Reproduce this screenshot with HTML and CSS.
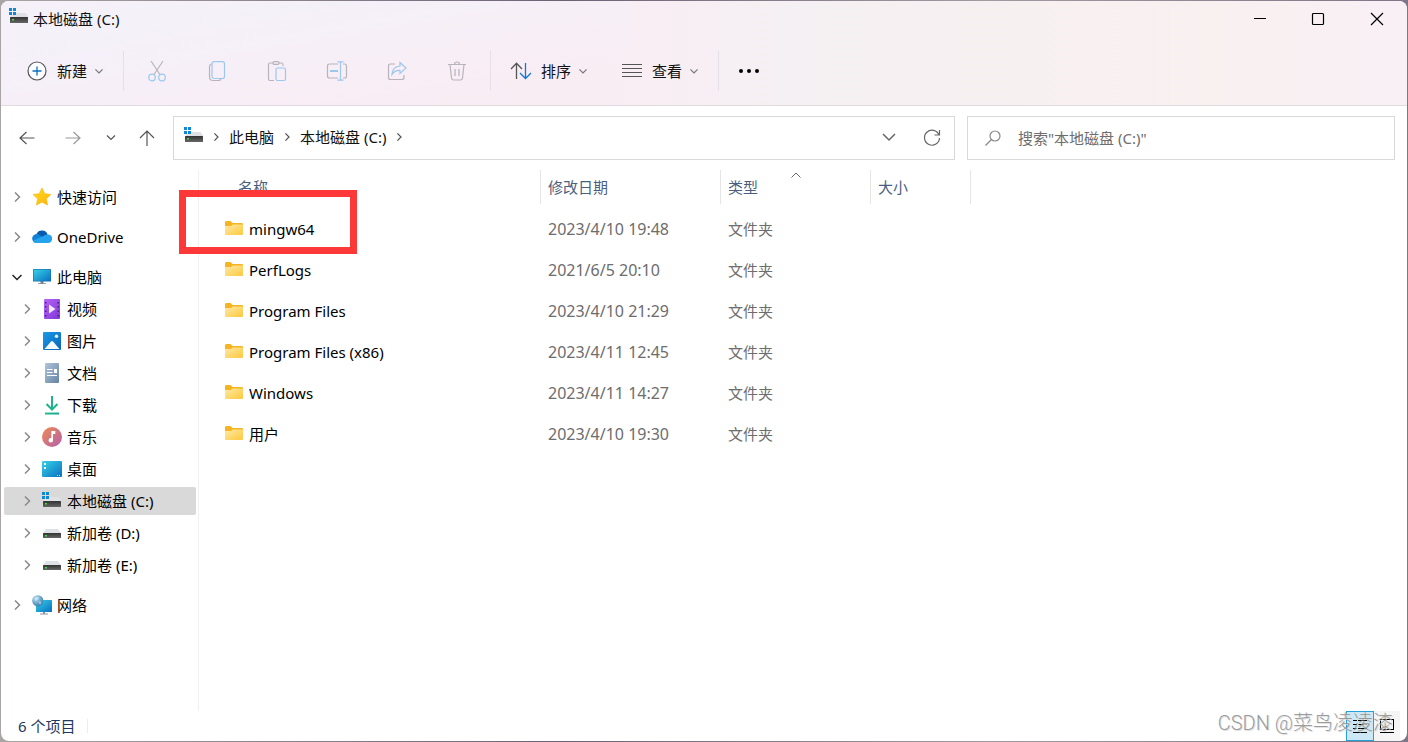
FILE: index.html
```html
<!DOCTYPE html>
<html lang="zh-CN">
<head>
<meta charset="utf-8">
<title>本地磁盘 (C:)</title>
<link rel="stylesheet" href="styles.css">
</head>
<body>
<svg class="defs" aria-hidden="true">
  <defs>
    <linearGradient id="g-folder" x1="0" y1="0" x2="1" y2="1"><stop offset="0" stop-color="#ffe9a6"/><stop offset="1" stop-color="#fdc93d"/></linearGradient>
    <linearGradient id="g-screen" x1="0" y1="0" x2="1" y2="1"><stop offset="0" stop-color="#35d3e6"/><stop offset="1" stop-color="#0b6fc2"/></linearGradient>
    <linearGradient id="g-star" x1="0" y1="0" x2="1" y2="1"><stop offset="0" stop-color="#ffdb1f"/><stop offset="1" stop-color="#fdb30c"/></linearGradient>
    <linearGradient id="g-video" x1="0" y1="0" x2="1" y2="1"><stop offset="0" stop-color="#b565f5"/><stop offset="1" stop-color="#8036d8"/></linearGradient>
    <linearGradient id="g-pic" x1="0" y1="0" x2="1" y2="1"><stop offset="0" stop-color="#1a9be6"/><stop offset="1" stop-color="#0a63bb"/></linearGradient>
    <linearGradient id="g-doc" x1="0" y1="0" x2="1" y2="1"><stop offset="0" stop-color="#b3c6d9"/><stop offset="1" stop-color="#6482a4"/></linearGradient>
    <linearGradient id="g-down" x1="0" y1="0" x2="1" y2="1"><stop offset="0" stop-color="#37c48b"/><stop offset="1" stop-color="#0a9f96"/></linearGradient>
    <linearGradient id="g-music" x1="0" y1="0" x2="1" y2="1"><stop offset="0" stop-color="#f08a50"/><stop offset="1" stop-color="#b35fae"/></linearGradient>
    <radialGradient id="g-globe" cx=".35" cy=".3" r=".8"><stop offset="0" stop-color="#b5dcf0"/><stop offset="1" stop-color="#2b77a8"/></radialGradient>
    <linearGradient id="g-drive" x1="0" y1="0" x2="0" y2="1"><stop offset="0" stop-color="#333"/><stop offset="1" stop-color="#666"/></linearGradient>
  </defs>
  <symbol id="i-drive" viewBox="0 0 20 20"><path d="M4 6h12l3 4H1z" fill="#dfe1e4"/><rect x="1" y="10" width="18" height="5" rx=".6" fill="url(#g-drive)"/><rect x="3" y="12" width="2" height="1.500" fill="#36e34a"/></symbol>
  <symbol id="i-sysdrive" viewBox="0 0 20 20"><path d="M7 6h9.500l3 4H2V8h5z" fill="#dfe1e4"/><rect x="1" y="10" width="18" height="6" rx=".6" fill="url(#g-drive)"/><rect x="3" y="12" width="2" height="1.500" fill="#36e34a"/><path d="M0 1h3v3H0zM4 1h3v3H4zM0 5h3v3H0zM4 5h3v3H4z" fill="#0f88d8"/></symbol>
  <symbol id="i-folder" viewBox="0 0 20 20"><path d="M1 3.500Q1 2 2.300 2h4.200L8.500 4h9.200Q19 4 19 5.300V9H1z" fill="#f5b420"/><path d="M1 7h6l1.800-1.600H18.200q.8 0 .8.800v8.800q0 1-1 1H2q-1 0-1-1z" fill="url(#g-folder)"/></symbol>
  <symbol id="i-star" viewBox="0 0 20 20"><path d="M10 1l2.700 5.700 6.200.8-4.500 4.300 1.100 6.200-5.500-3-5.500 3 1.100-6.200L1.100 7.500l6.200-.8z" fill="url(#g-star)" stroke="#f9bd16" stroke-width=".8" stroke-linejoin="round"/></symbol>
  <symbol id="i-cloud" viewBox="0 0 20 20"><path d="M4.500 7A6 6 0 0 1 15.600 7.500L10 11.500z" fill="#0a5ab0"/><path d="M4.600 16A4.500 4.500 0 1 1 6 7.200L12.500 11z" fill="#1382d6"/><path d="M15.800 7.400A4.300 4.300 0 0 1 16 16H4.600Q2.500 16 1 13.800L12 8.800q1.500-1.500 3.800-1.400z" fill="#26a3ee"/></symbol>
  <symbol id="i-pc" viewBox="0 0 20 20"><path d="M8.500 14h3v2.300H14V17H6v-.7h2.500z" fill="#7b8794"/><rect x="1" y="2" width="18" height="12.500" rx=".6" fill="#176ca8"/><rect x="1.600" y="2.600" width="16.800" height="11.300" fill="url(#g-screen)"/></symbol>
  <symbol id="i-video" viewBox="0 0 20 20"><rect x="2" y="0" width="16" height="20" rx="1" fill="url(#g-video)"/><path d="M3 3h1.500v1.500H3zM3 7h1.500v1.500H3zM3 11.500h1.500V13H3zM3 16h1.500v1.500H3zM15.500 3H17v1.500h-1.500zM15.500 7H17v1.500h-1.500zM15.500 11.500H17V13h-1.500zM15.500 16H17v1.500h-1.500z" fill="#43207c"/><path d="M7 5.500l6.500 4.500L7 14.500z" fill="#f4eaff"/></symbol>
  <symbol id="i-pic" viewBox="0 0 20 20"><rect x="1" y="1" width="18" height="18" rx="1" fill="url(#g-pic)"/><path d="M2.500 18l6.300-7.300q1.200-1.200 2.400 0L17.500 18z" fill="#f4faff"/><circle cx="14.500" cy="5.300" r="1.700" fill="#e8f6ff"/></symbol>
  <symbol id="i-doc" viewBox="0 0 20 20"><rect x="3" y="0" width="14" height="20" rx="1" fill="url(#g-doc)"/><path d="M5 6.500h5.500M5 9.500h5.500M5 12.500h10" stroke="#fff" stroke-width="1.200"/><rect x="12" y="6" width="3" height="4" fill="#fff"/></symbol>
  <symbol id="i-down" viewBox="0 0 20 20"><path d="M10 1v13M4.500 9l5.500 5.500L15.500 9" fill="none" stroke="#20b38f" stroke-width="2"/><rect x="3" y="17.500" width="14" height="2" fill="url(#g-down)"/></symbol>
  <symbol id="i-music" viewBox="0 0 20 20"><circle cx="10" cy="10" r="10" fill="url(#g-music)"/><path d="M9.300 4h4v3H11v6.200a2.200 2.200 0 1 1-1.700-2z" fill="#fff"/></symbol>
  <symbol id="i-desk" viewBox="0 0 20 20"><rect x="0" y="2" width="20" height="16" rx="1" fill="url(#g-screen)"/><path d="M2 4h2v2H2zM2 8h2v2H2z" fill="#fff"/><path d="M15 16.500h1M17 16.500h1" stroke="#bfe6ff"/></symbol>
  <symbol id="i-net" viewBox="0 0 20 20"><path d="M11 16h2v2.500h3v1H8v-1h3z" fill="#8795a3"/><rect x="4" y="5" width="16" height="12" rx=".6" fill="url(#g-screen)"/><circle cx="5.800" cy="5.800" r="5.600" fill="url(#g-globe)"/><path d="M2.500 3Q5 1 7 2.500L5.500 5 3 6zM6.500 6.500l3 .5-1.500 3z" fill="#d5edf6" opacity=".6"/></symbol>
  <symbol id="i-right" viewBox="0 0 10 10"><path d="M3 .5L7.500 5 3 9.500" fill="none" stroke="currentColor" stroke-width="1.500"/></symbol>
  <symbol id="i-open" viewBox="0 0 10 10"><path d="M.5 3L5 7.500 9.500 3" fill="none" stroke="currentColor" stroke-width="1.500"/></symbol>
</svg>

<div class="window">
  <header class="chrome">
    <div class="titlebar">
      <h1 class="title"><svg class="icon"><use href="#i-sysdrive"/></svg>本地磁盘 (C:)</h1>
      <div class="window-buttons">
        <button class="win-btn" aria-label="最小化"><svg class="caption" viewBox="0 0 14 14"><path d="M1 6.500h12"/></svg></button>
        <button class="win-btn" aria-label="最大化"><svg class="caption" viewBox="0 0 14 14"><rect x="1.500" y="1.500" width="11" height="11" rx="1"/></svg></button>
        <button class="win-btn" aria-label="关闭"><svg class="caption" viewBox="0 0 14 14"><path d="M1 1l12 12M13 1L1 13"/></svg></button>
      </div>
    </div>
    <div class="toolbar">
      <button class="cmd"><svg class="icon" viewBox="0 0 20 20"><circle cx="10" cy="10" r="9" fill="#fdfcff" stroke="#555" stroke-width="1.200"/><path d="M10 5.500v9M5.500 10h9" stroke="#0a6fc8" stroke-width="1.300"/></svg><span>新建</span><svg class="caret"><use href="#i-open"/></svg></button>
      <div class="divider"></div>
      <div class="icon-group">
        <button class="icon-btn" aria-label="剪切"><svg class="icon line" viewBox="0 0 20 20"><path d="M4 0l9 13.500M16 0L7 13.500"/><g class="blue"><circle cx="5" cy="16.500" r="3.300"/><circle cx="15" cy="16.500" r="3.300"/></g></svg></button>
        <button class="icon-btn" aria-label="复制"><svg class="icon line" viewBox="0 0 20 20"><path d="M4.500 3Q2.500 3.500 2.500 5.500V16q0 3.500 3.500 3.500h5.500q2 0 2.500-1.500"/><rect class="blue" x="5" y=".7" width="12.500" height="16.800" rx="2"/></svg></button>
        <button class="icon-btn" aria-label="粘贴"><svg class="icon line" viewBox="0 0 20 20"><path d="M7 19.500H3q-1.500 0-1.500-1.500V3.500Q1.500 2 3 2h3M12 2h2.500Q16 2 16 3.500V5"/><rect x="6" y=".6" width="6" height="2.800" rx="1.200"/><rect class="blue" x="9" y="7" width="9.500" height="12.500" rx="1.500"/></svg></button>
        <button class="icon-btn" aria-label="重命名"><svg class="icon line" viewBox="0 0 20 20"><path d="M11 3H2.500Q.5 3 .5 5v10q0 2 2 2H11M16 3h1.500q2 0 2 2v10q0 2-2 2H16"/><g class="blue"><path d="M13.500 1v18M10.500.8h6M10.500 19.200h6"/><path d="M3 10h8" stroke-width="2.200"/></g></svg></button>
        <button class="icon-btn" aria-label="共享"><svg class="icon line" viewBox="0 0 20 20"><path d="M8 3H3.500Q1.500 3 1.500 5v11.500q0 2 2 2H15q2 0 2-2V14"/><path class="blue" d="M13 1.500l6 5.500-6 5.500V9.500Q8 9 5 13.500 5.500 5.500 13 5z"/></svg></button>
        <button class="icon-btn" aria-label="删除"><svg class="icon line" viewBox="0 0 20 20"><path d="M1 3.500h18M7.500 3.500Q7.500 1 10 1t2.500 2.500M3 3.500L4.500 17q.3 2 2 2h7q1.700 0 2-2L17 3.500M8 8v7M12 8v7"/></svg></button>
      </div>
      <div class="divider"></div>
      <button class="cmd"><svg class="icon" viewBox="0 0 20 20" fill="none" stroke-width="1.300"><path d="M5.500 18V2.500M0 8l5.500-5.700L11 8" stroke="#555"/><path d="M14.500 2v15.500M9 12l5.500 5.500L20 12" stroke="#0a78d4"/></svg><span>排序</span><svg class="caret"><use href="#i-open"/></svg></button>
      <button class="cmd cmd-view"><svg class="icon" viewBox="0 0 20 20"><path d="M0 3.500h20M0 7.500h20M0 11.500h20M0 15.500h20" stroke="#555"/></svg><span>查看</span><svg class="caret"><use href="#i-open"/></svg></button>
      <div class="divider"></div>
      <button class="more" aria-label="更多"><svg class="icon" viewBox="0 0 20 20"><circle cx="2" cy="12" r="2"/><circle cx="10" cy="12" r="2"/><circle cx="18" cy="12" r="2"/></svg></button>
    </div>
  </header>

  <div class="addressbar">
    <nav class="history">
      <button class="nav-btn" aria-label="后退"><svg class="nav-icon" viewBox="0 0 16 16"><path d="M15.500 8H1M7.500 2L1 8l6.500 6"/></svg></button>
      <button class="nav-btn forward" aria-label="前进"><svg class="nav-icon" viewBox="0 0 16 16"><path d="M.5 8H15M8.500 2L15 8l-6.500 6"/></svg></button>
      <button class="nav-btn recent" aria-label="最近"><svg class="nav-icon" viewBox="0 0 16 16"><path d="M4 5.500L8 9.500 12 5.500"/></svg></button>
      <button class="nav-btn up" aria-label="向上"><svg class="nav-icon" viewBox="0 0 16 16"><path d="M8 16V1M1 8l7-7 7 7"/></svg></button>
    </nav>
    <div class="path">
      <svg class="icon"><use href="#i-sysdrive"/></svg>
      <svg class="sep"><use href="#i-right"/></svg>
      <a href="#pc">此电脑</a>
      <svg class="sep"><use href="#i-right"/></svg>
      <a href="#c">本地磁盘 (C:)</a>
      <svg class="sep"><use href="#i-right"/></svg>
      <button class="path-btn first" aria-label="展开地址"><svg class="nav-icon" viewBox="0 0 16 16"><path d="M2 5l6 6 6-6" stroke-width="1.500"/></svg></button>
      <button class="path-btn" aria-label="刷新"><svg class="nav-icon" viewBox="0 0 16 16"><path d="M15 6A7.500 7.500 0 1 0 15.500 9M15.500 1v5h-5"/></svg></button>
    </div>
    <label class="search">
      <svg class="nav-icon" viewBox="0 0 16 16"><circle cx="10" cy="6" r="5"/><path d="M6.500 9.500L.5 15.500"/></svg>
      <input type="search" aria-label="搜索" placeholder='搜索"本地磁盘 (C:)"'>
    </label>
  </div>

  <div class="body">
    <nav class="sidebar">
      <a class="item" href="#quick"><svg class="chev"><use href="#i-right"/></svg><svg class="icon"><use href="#i-star"/></svg>快速访问</a>
      <a class="item" href="#onedrive"><svg class="chev"><use href="#i-right"/></svg><svg class="icon"><use href="#i-cloud"/></svg>OneDrive</a>
      <div class="group">
        <a class="item open" href="#pc"><svg class="chev"><use href="#i-open"/></svg><svg class="icon"><use href="#i-pc"/></svg>此电脑</a>
        <a class="item child" href="#video"><svg class="chev"><use href="#i-right"/></svg><svg class="icon"><use href="#i-video"/></svg>视频</a>
        <a class="item child" href="#pictures"><svg class="chev"><use href="#i-right"/></svg><svg class="icon"><use href="#i-pic"/></svg>图片</a>
        <a class="item child" href="#documents"><svg class="chev"><use href="#i-right"/></svg><svg class="icon"><use href="#i-doc"/></svg>文档</a>
        <a class="item child" href="#downloads"><svg class="chev"><use href="#i-right"/></svg><svg class="icon"><use href="#i-down"/></svg>下载</a>
        <a class="item child" href="#music"><svg class="chev"><use href="#i-right"/></svg><svg class="icon"><use href="#i-music"/></svg>音乐</a>
        <a class="item child" href="#desktop"><svg class="chev"><use href="#i-right"/></svg><svg class="icon"><use href="#i-desk"/></svg>桌面</a>
        <a class="item child selected" href="#c"><svg class="chev"><use href="#i-right"/></svg><svg class="icon"><use href="#i-sysdrive"/></svg>本地磁盘 (C:)</a>
        <a class="item child" href="#d"><svg class="chev"><use href="#i-right"/></svg><svg class="icon"><use href="#i-drive"/></svg>新加卷 (D:)</a>
        <a class="item child" href="#e"><svg class="chev"><use href="#i-right"/></svg><svg class="icon"><use href="#i-drive"/></svg>新加卷 (E:)</a>
      </div>
      <a class="item" href="#network"><svg class="chev"><use href="#i-right"/></svg><svg class="icon"><use href="#i-net"/></svg>网络</a>
    </nav>

    <main class="content">
      <table class="files">
        <colgroup><col class="c-name"><col class="c-date"><col class="c-type"><col class="c-size"><col></colgroup>
        <thead>
          <tr>
            <th><div class="head head-name">名称</div></th>
            <th><div class="head">修改日期</div></th>
            <th><div class="head">类型<svg class="sort" viewBox="0 0 10 6"><path d="M.5 5.500L5 1l4.500 4.500"/></svg></div></th>
            <th><div class="head">大小</div></th>
            <th></th>
          </tr>
        </thead>
        <tbody>
          <tr><td><div class="name marked"><svg class="icon"><use href="#i-folder"/></svg>mingw64<span class="marker"></span></div></td><td class="date">2023/4/10 19:48</td><td>文件夹</td><td></td><td></td></tr>
          <tr><td><div class="name"><svg class="icon"><use href="#i-folder"/></svg>PerfLogs</div></td><td class="date">2021/6/5 20:10</td><td>文件夹</td><td></td><td></td></tr>
          <tr><td><div class="name"><svg class="icon"><use href="#i-folder"/></svg>Program Files</div></td><td class="date">2023/4/10 21:29</td><td>文件夹</td><td></td><td></td></tr>
          <tr><td><div class="name"><svg class="icon"><use href="#i-folder"/></svg>Program Files (x86)</div></td><td class="date">2023/4/11 12:45</td><td>文件夹</td><td></td><td></td></tr>
          <tr><td><div class="name"><svg class="icon"><use href="#i-folder"/></svg>Windows</div></td><td class="date">2023/4/11 14:27</td><td>文件夹</td><td></td><td></td></tr>
          <tr><td><div class="name"><svg class="icon"><use href="#i-folder"/></svg>用户</div></td><td class="date">2023/4/10 19:30</td><td>文件夹</td><td></td><td></td></tr>
        </tbody>
      </table>
    </main>
  </div>

  <footer class="status">
    <span class="count">6 个项目</span>
    <div class="views">
      <button class="view-btn active" aria-label="详细信息"><svg class="view-icon" viewBox="0 0 14 14"><path d="M0 1.500h4M5 1.500h9M0 5.500h4M5 5.500h9M0 9.500h4M5 9.500h9M0 13.500h14"/></svg></button>
      <button class="view-btn" aria-label="大图标"><svg class="view-icon" viewBox="0 0 14 14"><rect x=".5" y=".5" width="13" height="10"/><path d="M0 13.500h14"/></svg></button>
    </div>
    <span class="watermark">CSDN @菜鸟凌凌漆</span>
  </footer>
</div>
</body>
</html>
```
FILE: styles.css
```css
* { box-sizing: border-box; }

body {
  margin: 0;
  height: 100vh;
  padding: 1px;
  background: linear-gradient(90deg, #a9a5a4, #6d6276 40%, #a39aa0 70%, #7e7688);
  font: 15px/20px "Noto Sans", "Noto Sans CJK SC", sans-serif;
  color: #111;
}

button { border: 0; padding: 0; background: none; font: inherit; color: inherit; }
a { color: inherit; text-decoration: none; }
svg { flex: none; overflow: visible; }
.defs { position: absolute; width: 0; height: 0; }
.icon { width: 20px; height: 20px; }

.window {
  height: 100%;
  display: flex;
  flex-direction: column;
  background: #fff;
  border-radius: 8px;
  overflow: hidden;
}

/* Title bar and command bar */
.chrome {
  background:
    linear-gradient(170deg, #f4f1f9 20%, rgba(244, 241, 249, 0) 80%) 0 0 / 45% 100% no-repeat,
    linear-gradient(90deg, #f9edf7, #f9edf4 42%, #f5f0f3 56%, #f9f0f0 86%, #f8f0f5);
  border-bottom: 1px solid #dfdbe0;
}
.titlebar { height: 36px; display: flex; justify-content: space-between; }
.title {
  display: flex;
  align-items: center;
  gap: 4px;
  margin: 0;
  padding-left: 8px;
  font-size: 15px;
  font-weight: 400;
}
.title .icon { margin-bottom: 4px; }
.window-buttons { display: flex; }
.win-btn { width: 58px; display: grid; place-items: center; }
.win-btn:last-child { width: 60px; }
.caption { width: 14px; height: 14px; fill: none; stroke: #000; stroke-width: 1.2; }

.toolbar { height: 68px; padding: 0 26px; display: flex; align-items: center; }
.cmd { display: flex; align-items: center; gap: 10px; }
.caret { width: 8px; height: 8px; color: #777; margin-left: -2px; }
.divider { width: 1px; height: 40px; background: #e5dfe7; margin: 0 20px; }
.cmd-view { margin-left: 35px; }
.icon-group { display: flex; gap: 36px; padding: 0 1px; }
.icon-btn { width: 24px; height: 24px; display: grid; place-items: center; }
.line { fill: none; stroke: #b9b3bd; stroke-width: 1.2; }
.blue { stroke: #9cc8ee; }

/* Address bar */
.addressbar {
  display: grid;
  grid-template-columns: 172px 782fr 440fr;
  padding: 10px 12px 10px 0;
}
.history { display: flex; align-items: center; padding-left: 6px; }
.nav-btn { width: 40px; height: 40px; display: grid; place-items: center; color: #555; }
.nav-icon { width: 16px; height: 16px; fill: none; stroke: currentColor; stroke-width: 1.2; }
.forward { color: #999; width: 52px; }
.recent { width: 24px; }
.up { width: 48px; }
.path {
  height: 44px;
  display: flex;
  align-items: center;
  gap: 9px;
  padding: 0 5px 2px 10px;
  border: 1px solid #d9d9d9;
}
.path .icon { margin: 0 -1px 2px 0; }
.sep { width: 8px; height: 8px; color: #555; }
.path-btn { width: 34px; height: 40px; display: grid; place-items: center; color: #666; }
.path-btn.first { margin-left: auto; }
.search {
  display: flex;
  align-items: center;
  gap: 17px;
  margin-left: 12px;
  padding-left: 17px;
  border: 1px solid #d9d9d9;
  color: #888;
}
.search input {
  flex: 1;
  min-width: 0;
  border: 0;
  padding: 0;
  outline: 0;
  background: none;
  font: inherit;
}
.search input::placeholder { color: #6d6d6d; opacity: 1; }

/* Navigation pane */
.body { flex: 1; min-height: 0; display: flex; }
.sidebar {
  width: 198px;
  flex: none;
  display: flex;
  flex-direction: column;
  gap: 12px;
  padding: 13px 2px 0 3px;
  border-right: 1px solid #f0f0f0;
}
.group { display: flex; flex-direction: column; gap: 4px; }
.item {
  height: 28px;
  display: flex;
  align-items: center;
  gap: 5px;
  padding-left: 8px;
  border-radius: 2px;
  color: #000;
}
.child { padding-left: 18px; }
.chev { width: 10px; height: 10px; margin-right: 5px; color: #8a8a8a; }
.open .chev { color: #222; }
.selected { background: #d9d9d9; }

/* File list */
.content { flex: 1; min-width: 0; }
.files { width: 100%; table-layout: fixed; border-collapse: collapse; }
.c-name { width: 342px; }
.c-date { width: 180px; }
.c-type { width: 150px; }
.c-size { width: 100px; }
.files th {
  padding: 0 0 4px;
  font-weight: 400;
  text-align: left;
  color: #4a5f80;
}
.head {
  position: relative;
  height: 34px;
  line-height: 34px;
  padding-left: 7px;
  border-right: 1px solid #e5e5e5;
}
.head-name { padding-left: 39px; }
.sort {
  position: absolute;
  left: calc(50% - 5px);
  top: 2px;
  width: 10px;
  height: 6px;
  fill: none;
  stroke: #666;
}
.files td { height: 41px; padding: 0 0 0 7px; color: #6d6d6d; }
.files td:first-child { padding: 0; }
.files .date { font-size: 16px; }
.name {
  display: flex;
  align-items: center;
  gap: 5px;
  height: 41px;
  padding-left: 25px;
  color: #000;
}
.marked { position: relative; }
.marker {
  position: absolute;
  left: -20px;
  top: -18px;
  width: 178px;
  height: 64px;
  border: 7px solid #fc3838;
}

/* Status bar */
.status {
  position: relative;
  height: 30px;
  display: flex;
  align-items: center;
  justify-content: space-between;
  padding: 0 7px 0 17px;
  color: #1e395b;
}
.count { padding-right: 12px; border-right: 1px solid #eee; line-height: 14px; }
.views { display: flex; }
.view-btn { width: 26px; height: 30px; display: grid; place-items: center; background: #f5f5f5; }
.view-btn.active { width: 28px; background: #cce8f6; border: 1px solid #26a0da; }
.view-icon { width: 14px; height: 14px; fill: none; stroke: #000; }
.watermark {
  position: absolute;
  right: 14px;
  top: 1px;
  font: 300 20px/22px Roboto, "Noto Sans CJK SC", sans-serif;
  color: #8b8b8b;
  opacity: .85;
  text-shadow: 1px 1px 0 #ddd;
}
```
